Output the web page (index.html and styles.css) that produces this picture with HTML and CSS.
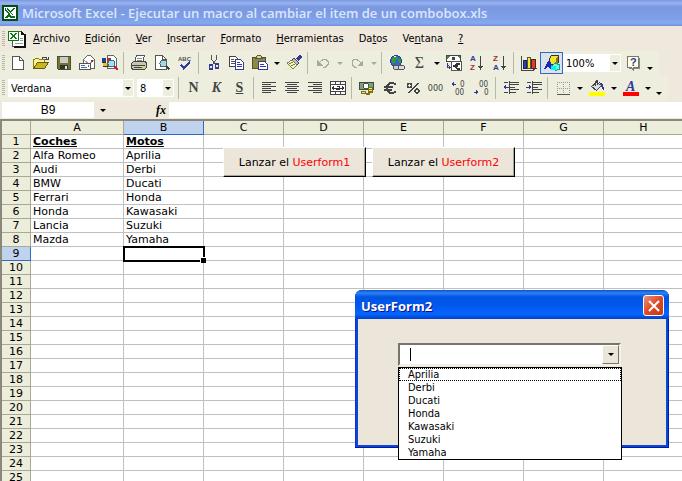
FILE: index.html
```html
<!DOCTYPE html>
<html lang="es">
<head>
    <meta charset="UTF-8">
    <title>Microsoft Excel - Ejecutar un macro al cambiar el item de un combobox.xls</title>
    <link rel="stylesheet" href="styles.css">
</head>
<body>
    <header class="titlebar">
        <svg class="ic" viewBox="0 0 16 16"><path fill="#054d10" d="M0 0h16v16H0z"/><path fill="#fff" d="M2 2h12v12H2z"/><path fill="#0a6e1e" d="M3 3h3l2 3 3-3h2L9 8l4 4v1H8l-1-2-2 2H3l3-4-3-4z"/><path stroke="#fff" d="M4 3.500l6 7M12.500 10h-3"/></svg>
        <h1>Microsoft Excel - Ejecutar un macro al cambiar el item de un combobox.xls</h1>
    </header>

    <nav class="menubar">
        <span class="grip"></span>
        <svg class="book" viewBox="0 0 18 18"><path fill="#fff" stroke="#555" d="M6.500 1.500h7l3 3v12h-12v-6"/><path fill="#111" d="M16 4h2v14H6v-2h10zM13 1l4 4h-4z"/><path fill="#999" d="M12 8h3v1h-3zM12 10h3v1h-3zM7 13h8v1H7z"/><path fill="#fff" stroke="#087a16" d="M.5 1.500h10v9H.5z"/><path stroke="#087a16" stroke-width="2" d="M2.500 3l6 6"/><path stroke="#087a16" d="M8.500 3l-6 6"/></svg>
        <a href="#"><u>A</u>rchivo</a>
        <a href="#"><u>E</u>dición</a>
        <a href="#"><u>V</u>er</a>
        <a href="#"><u>I</u>nsertar</a>
        <a href="#"><u>F</u>ormato</a>
        <a href="#"><u>H</u>erramientas</a>
        <a href="#">Da<u>t</u>os</a>
        <a href="#">Ve<u>n</u>tana</a>
        <a href="#"><u>?</u></a>
    </nav>

    <div class="toolbar">
        <span class="grip"></span>
        <button class="tool" aria-label="Nuevo"><svg class="ic" viewBox="0 0 16 16"><path fill="#fff" stroke="#555" d="M2.500 1.500h7l4 4v9h-11z"/><path fill="none" stroke="#555" d="M9.500 1.500v4h4"/></svg></button>
        <button class="tool" aria-label="Abrir"><svg class="ic" viewBox="0 0 16 16"><path fill="#fdf58c" stroke="#8a7b14" d="M.5 13.500v-9h1l1-1h3l1 1h5v3"/><path fill="#c9b51e" stroke="#655a14" d="M.5 13.500l4-6h11l-4 6z"/><path fill="none" stroke="#444" d="M9 3.500l1-1h3l1.500 2M12 4.500h3v-3"/></svg></button>
        <button class="tool" aria-label="Guardar"><svg class="ic" viewBox="0 0 16 16"><path fill="#77752c" stroke="#4c4b3c" d="M1.500 1.500h13v13h-12l-1-1z"/><path fill="#c9cbc4" d="M4 2h8v6H4z"/><path fill="#333" d="M4 10h8v4H4z"/><path fill="#ddd" d="M9 11h2v3H9z"/></svg></button>
        <button class="tool" aria-label="Correo"><svg class="ic" viewBox="0 0 16 16"><path fill="#fff" stroke="#666" d="M4.500 8V4.500l4-4h3l4 4v9h-4"/><path fill="none" stroke="#999" d="M5 5l5 4 5-4"/><path fill="#c22" d="M12 5h2v2h-2z"/><path fill="#fff" stroke="#555" d="M.5 8.500h11v6H.5z"/><path fill="#46a" d="M2 10h4v1H2zM2 12h6v1H2zM9 10h1v2H9z"/></svg></button>
        <button class="tool" aria-label="Buscar"><svg class="ic" viewBox="0 0 16 16"><path fill="#fff" stroke="#666" d="M5.500 .5h6l3 3v10h-9z"/><path fill="#248" d="M0 3h4v4H0zM6 3h3v2H6z"/><path fill="#c22" d="M5 3h3v3H5z"/><path fill="#e8c51c" d="M1 8h4v3H1z"/><path fill="#333" d="M0 7h4v1H0zM1 11h5v1H1z"/><circle cx="9.500" cy="8.500" r="3.500" fill="#9fe1ee" stroke="#467"/><path stroke="#b23" stroke-width="2" d="M12 11l3.500 4"/></svg></button>
        <span class="sep"></span>
        <button class="tool" aria-label="Imprimir"><svg class="ic" viewBox="0 0 16 16"><path fill="#fff" stroke="#555" d="M3.500 7.500l2-7h8l-2 7z"/><path fill="#888" d="M6 3h5v1H6zM6 5h5v1H6z"/><path fill="#c7c6b3" stroke="#444" d="M.5 8.500l2-2h12l1 2v4l-2 2h-12l-1-2z"/><path fill="#444" d="M1 10h13v1H1zM3 12h8v1H3z"/><path fill="#ee3" d="M9 11h3v1H9z"/></svg></button>
        <button class="tool" aria-label="Vista preliminar"><svg class="ic" viewBox="0 0 16 16"><path fill="#fff" stroke="#555" d="M1.500 .5h7l4 4v10h-11z"/><path fill="none" stroke="#555" d="M8.500 .5v4h4"/><circle cx="9.500" cy="8.500" r="3.500" fill="#9cdce2" stroke="#566"/><path stroke="#444" stroke-width="2" d="M12 11l3.500 3.500"/></svg></button>
        <button class="tool" aria-label="Ortografía"><svg class="ic" viewBox="0 0 16 16"><text class="abc" x="1" y="6">ABC</text><path fill="none" stroke="#33399a" stroke-width="2" d="M4 9.500l3 4 6-7"/></svg></button>
        <span class="sep"></span>
        <button class="tool" aria-label="Cortar"><svg class="ic" viewBox="0 0 16 16"><path fill="none" stroke="#555" d="M5.500 0v4l4 6M10.500 0v4l-4 6"/><path fill="none" stroke="#33399a" stroke-width="1.500" d="M3.500 10h3v4h-3zM9.500 9h3v4h-3z"/></svg></button>
        <button class="tool" aria-label="Copiar"><svg class="ic" viewBox="0 0 16 16"><path fill="#fff" stroke="#444" d="M.5 1.500h6l3 3v7h-9z"/><path fill="#555" d="M2 4h3v1H2zM2 6h4v1H2zM2 8h4v1H2z"/><path fill="#fff" stroke="#33399a" d="M6.500 4.500h5l3 3v7h-8z"/><path fill="#33399a" d="M8 7h3v1H8zM8 9h5v1H8zM8 11h5v1H8z"/></svg></button>
        <button class="tool" aria-label="Pegar"><svg class="ic" viewBox="0 0 16 16"><path fill="#8c8a45" stroke="#55532a" d="M.5 2.500h13v11H.5z"/><path fill="#e5dc6c" stroke="#555" d="M3.500 3.500l2-3h3l2 3z"/><path fill="#fff" stroke="#33399a" d="M6.500 6.500h6l3 3v5h-9z"/><path fill="#33399a" d="M8 9h4v1H8zM8 11h6v1H8z"/></svg></button>
        <button class="arrow" aria-label="Opciones de pegado"></button>
        <button class="tool" aria-label="Copiar formato"><svg class="ic" viewBox="0 0 16 16"><path stroke="#33399a" stroke-width="3" d="M15 1l-4 4"/><path fill="#bbb" stroke="#444" d="M8 3l5 5-2 2-5-5z"/><path fill="#fbf9a5" stroke="#777" d="M6 5L1 8l6 6 4-4z"/><path stroke="#776" d="M3 9l4-2M5 11l4-2"/><path fill="#ee0" d="M0 14h1v1H0zM2 13h1v1H2zM4 14h1v1H4z"/></svg></button>
        <span class="sep"></span>
        <button class="tool" aria-label="Deshacer" disabled><svg class="ic" viewBox="0 0 16 16"><path fill="none" stroke="#aaa99b" d="M8 12.500h2l3-3v-3l-2-2H8L4 8"/><path fill="#aaa99b" d="M2 5v6h6z"/></svg></button>
        <button class="arrow off" aria-label="Lista deshacer" disabled></button>
        <button class="tool" aria-label="Rehacer" disabled><svg class="ic" viewBox="0 0 16 16"><path fill="none" stroke="#aaa99b" d="M8 12.500H6l-3-3v-3l2-2h3L12 8"/><path fill="#aaa99b" d="M14 5v6H8z"/></svg></button>
        <button class="arrow off" aria-label="Lista rehacer" disabled></button>
        <span class="sep"></span>
        <button class="tool" aria-label="Hipervínculo"><svg class="ic" viewBox="0 0 16 16"><circle cx="7" cy="6" r="5.500" fill="#3b62c8" stroke="#248"/><path fill="#2aa52a" d="M4 2h4v3H6v3H3V4zM9 4h3v4h-2z"/><path fill="#fff" d="M5 1h2v1H5z"/><rect x="4.500" y="10.500" width="6" height="4" rx="2" fill="#ccc" stroke="#555"/><rect x="9.500" y="10.500" width="6" height="4" rx="2" fill="#ddd" stroke="#555"/></svg></button>
        <button class="tool sigma" aria-label="Autosuma">Σ</button>
        <button class="arrow" aria-label="Funciones"></button>
        <button class="tool" aria-label="Conversión de euro"><svg class="ic" viewBox="0 0 16 16"><path fill="#fff" stroke="#444" d="M.5 .5h14v6H.5z"/><path fill="#3f8f4a" d="M1 1h3L1 4zM14 1v3l-3-3z"/><circle cx="7.500" cy="3.500" r="1.500" fill="#444"/><path fill="#fff" stroke="#555" d="M5.500 6.500h10v9h-10z"/><path fill="none" stroke="#333" stroke-width="2" d="M13.500 8.500H11L9 11l2 2.500h2.500M7 11h5"/><path fill="none" stroke="#33399a" d="M1.500 8v4.500h3M2.500 10.500l2 2-2 2"/></svg></button>
        <button class="tool" aria-label="Orden ascendente"><svg class="ic" viewBox="0 0 16 16"><text class="az blue" x="1" y="6">A</text><text class="az red" x="1" y="15">Z</text><path fill="#444" d="M11 1h1v10h2l-2.500 4L9 11h2z"/></svg></button>
        <button class="tool" aria-label="Orden descendente"><svg class="ic" viewBox="0 0 16 16"><text class="az red" x="1" y="6">Z</text><text class="az blue" x="1" y="15">A</text><path fill="#444" d="M11 1h1v10h2l-2.500 4L9 11h2z"/></svg></button>
        <span class="sep"></span>
        <button class="tool" aria-label="Gráficos"><svg class="ic" viewBox="0 0 16 16"><path fill="none" stroke="#444" d="M.5 1v14h12l3-2"/><path fill="#2a3fd0" stroke="#224" d="M2.500 5.500h3v8h-3z"/><path fill="#f3e92b" stroke="#554" d="M6.500 2.500h3v11h-3z"/><path fill="#e23a2a" stroke="#522" d="M10.500 4.500h4v8l-1 1h-3z"/></svg></button>
        <button class="tool pressed" aria-label="Dibujo"><svg class="ic" viewBox="0 0 16 16"><path fill="#f4e52c" stroke="#333" d="M5.500 3.500l2-3h7v7l-2 2h-7z"/><path fill="#8a7d14" d="M12 3l2-2v7l-2 2z"/><path fill="#1a28c0" d="M0 14L4 6h2l3 8H6l-1-2H3l-1 2z"/><path fill="#6fd" stroke="#299" d="M7.500 11l4-3 4 2v4l-4 1.500z"/><circle cx="9.500" cy="13" r="2.500" fill="#1ee"/></svg></button>
        <label class="combo zoom"><select aria-label="Zoom"><option>100%</option></select></label>
        <button class="tool" aria-label="Ayuda"><svg class="ic" viewBox="0 0 16 16"><path fill="#888" d="M4 3h11v11H9v2l-3-2H4z"/><path fill="#fffee0" stroke="#777" d="M2.500 1.500h11v11h-5v2l-2-2h-4z"/><text class="qm" x="5" y="11">?</text></svg></button>
        <button class="arrow low" aria-label="Más botones"></button>
    </div>

    <div class="toolbar">
        <span class="grip"></span>
        <label class="combo font"><select aria-label="Fuente"><option>Verdana</option></select></label>
        <label class="combo size"><select aria-label="Tamaño de fuente"><option>8</option></select></label>
        <span class="sep"></span>
        <button class="tool letter"><b>N</b></button>
        <button class="tool letter"><b><i>K</i></b></button>
        <button class="tool letter"><b><u>S</u></b></button>
        <span class="sep"></span>
        <button class="tool" aria-label="Alinear a la izquierda"><svg class="ic" viewBox="0 0 16 16"><path stroke="#444" d="M1 2.500h14M1 4.500h9M1 6.500h14M1 8.500h9M1 10.500h14M1 12.500h9"/></svg></button>
        <button class="tool" aria-label="Centrar"><svg class="ic" viewBox="0 0 16 16"><path stroke="#444" d="M1 2.500h14M3 4.500h10M1 6.500h14M3 8.500h10M1 10.500h14M3 12.500h10"/></svg></button>
        <button class="tool" aria-label="Alinear a la derecha"><svg class="ic" viewBox="0 0 16 16"><path stroke="#444" d="M1 2.500h14M6 4.500h9M1 6.500h14M6 8.500h9M1 10.500h14M6 12.500h9"/></svg></button>
        <button class="tool" aria-label="Combinar y centrar"><svg class="ic" viewBox="0 0 16 16"><path fill="#fff" stroke="#444" d="M.5 1.500h15v13H.5zM.5 4.500h15M.5 11.500h15M5.500 1.500v3M10.500 1.500v3M5.500 11.500v3M10.500 11.500v3"/><path fill="#333" d="M1 8l3-2.500v5zM15 8l-3-2.500v5zM4 7.500h2v1H4zM10 7.500h2v1h-2z"/><path fill="none" stroke="#333" d="M6.500 6.500h3v3h-3v-1.500h3"/></svg></button>
        <span class="sep"></span>
        <button class="tool" aria-label="Estilo moneda"><svg class="ic" viewBox="0 0 16 16"><path fill="#7f9f7c" stroke="#3c4c3c" d="M.5 2.500h14v7H.5z"/><ellipse cx="7" cy="6" rx="3" ry="2.500" fill="#fff" stroke="#454"/><path fill="#f5ec5a" stroke="#7c7016" d="M9.500 7.500h4v5h-4zM2.500 11.500h4v2h-4zM7.500 13.500h3v1h-3z"/><path stroke="#7c7016" d="M9 9.500h5M9 11.500h5"/></svg></button>
        <button class="tool" aria-label="Euro"><svg class="ic" viewBox="0 0 16 16"><path fill="none" stroke="#444" stroke-width="2" d="M14 4.500C9 1 5 4 5 8s4 7 9 3.500M2 7h9M2 9.500h8"/></svg></button>
        <button class="tool" aria-label="Porcentaje"><svg class="ic" viewBox="0 0 16 16"><path fill="none" stroke="#444" stroke-width="1.500" d="M13 3L4 13"/><circle cx="4.500" cy="5.500" r="2" fill="none" stroke="#444" stroke-width="1.500"/><circle cx="12" cy="11" r="2" fill="none" stroke="#444" stroke-width="1.500"/></svg></button>
        <button class="tool zeros">000</button>
        <button class="tool" aria-label="Aumentar decimales"><svg class="ic" viewBox="0 0 16 16"><text class="dec" x="9" y="7">0</text><text class="dec" x="4" y="15">00</text><path fill="#33399a" d="M0 4l3-2.500v2h2v1H3v2z"/></svg></button>
        <button class="tool" aria-label="Disminuir decimales"><svg class="ic" viewBox="0 0 16 16"><text class="dec" x="5" y="7">00</text><text class="dec" x="10" y="15">0</text><path fill="#33399a" d="M5 12L2 9.500v2H0v1h2v2z"/></svg></button>
        <span class="sep"></span>
        <button class="tool" aria-label="Disminuir sangría"><svg class="ic" viewBox="0 0 16 16"><path stroke="#444" d="M1 2.500h4M7 2.500h9M7 4.500h9M7 7.500h5M7 9.500h9M1 12.500h4M7 12.500h6M6.500 1v13"/><path fill="#33399a" d="M0 7l3-2.500v2h3v1H3v2z"/></svg></button>
        <button class="tool" aria-label="Aumentar sangría"><svg class="ic" viewBox="0 0 16 16"><path stroke="#444" d="M1 2.500h4M7 2.500h9M7 4.500h9M7 7.500h5M7 9.500h9M1 12.500h4M7 12.500h6M6.500 1v13"/><path fill="#33399a" d="M6 7L3 4.500v2H0v1h3v2z"/></svg></button>
        <span class="sep"></span>
        <button class="tool" aria-label="Bordes"><svg class="ic" viewBox="0 0 16 16"><path fill="none" stroke="#999" stroke-dasharray="1 1" d="M2 2.500h13M2 8.500h13M2.500 2v12M8.500 2v12M14.500 2v12"/><path stroke="#555" d="M2 14.500h13"/></svg></button>
        <button class="arrow" aria-label="Tipos de borde"></button>
        <button class="tool" aria-label="Color de relleno"><svg class="ic" viewBox="0 0 16 16"><path fill="#ddd" stroke="#444" d="M2.500 6.500l5-4 5 3-5 5z"/><path fill="none" stroke="#444" d="M6.500 6V1.500l2-1v4"/><path fill="#33399a" d="M10 2l4 2 1 6-2-1-1-4z"/><path fill="#ff0" d="M0 12h16v4H0z"/></svg></button>
        <button class="arrow" aria-label="Colores de relleno"></button>
        <button class="tool" aria-label="Color de fuente"><svg class="ic" viewBox="0 0 16 16"><text class="fc" x="3" y="11">A</text><path fill="#f00" d="M0 12h16v4H0z"/></svg></button>
        <button class="arrow" aria-label="Colores de fuente"></button>
        <button class="arrow low" aria-label="Más botones"></button>
    </div>

    <div class="formulabar">
        <label class="namebox"><input type="text" aria-label="Cuadro de nombres" value="B9"></label>
        <button class="arrow name-arrow" aria-label="Nombres"></button>
        <button class="fx" aria-label="Insertar función"><i>fx</i></button>
        <input class="formula" type="text" aria-label="Barra de fórmulas">
    </div>

    <main class="sheet">
        <table class="grid">
            <colgroup><col class="c-num"><col class="c-a"><col span="7" class="c-std"></colgroup>
            <thead>
                <tr><th></th><th>A</th><th class="sel">B</th><th>C</th><th>D</th><th>E</th><th>F</th><th>G</th><th>H</th></tr>
            </thead>
            <tbody id="rows"></tbody>
        </table>

        <button class="launch launch-1">Lanzar el <span>Userform1</span></button>
        <button class="launch launch-2">Lanzar el <span>Userform2</span></button>

        <section class="userform">
            <div class="form-title">
                <h2>UserForm2</h2>
                <button class="close" aria-label="Cerrar"><svg viewBox="0 0 12 12"><path stroke="#fff" stroke-width="2" d="M1 1l10 10M11 1L1 11"/></svg></button>
            </div>
            <div class="form-body">
                <div class="field">
                    <span class="caret"></span>
                    <input type="text" aria-label="Motos">
                    <button class="arrow drop" aria-label="Desplegar"></button>
                </div>
                <select class="list" size="7" aria-label="Lista de motos">
                    <option class="first">Aprilia</option>
                    <option>Derbi</option>
                    <option>Ducati</option>
                    <option>Honda</option>
                    <option>Kawasaki</option>
                    <option>Suzuki</option>
                    <option>Yamaha</option>
                </select>
            </div>
        </section>
    </main>

    <script>
        const data = [
            ['Coches', 'Motos'],
            ['Alfa Romeo', 'Aprilia'],
            ['Audi', 'Derbi'],
            ['BMW', 'Ducati'],
            ['Ferrari', 'Honda'],
            ['Honda', 'Kawasaki'],
            ['Lancia', 'Suzuki'],
            ['Mazda', 'Yamaha']
        ];
        const rowCount = 25;
        const activeRow = 9;
        let html = '';

        for (let i = 1; i <= rowCount; i++) {
            const row = data[i - 1] || ['', ''];
            const active = i === activeRow;
            html += `<tr${i === 1 ? ' class="heading"' : ''}><th${active ? ' class="sel"' : ''}>${i}</th>`;
            html += `<td>${row[0]}</td><td${active ? ' class="active"' : ''}>${row[1]}</td>`;
            html += '<td></td>'.repeat(6) + '</tr>';
        }

        document.getElementById('rows').innerHTML = html;
    </script>
</body>
</html>
```

FILE: styles.css
```css
* {
    box-sizing: border-box;
}
body {
    margin: 0;
    height: 100vh;
    display: flex;
    flex-direction: column;
    overflow: hidden;
    background: #efe9dd;
    color: #000;
    font-family: "DejaVu Sans Condensed", "DejaVu Sans", sans-serif;
    font-size: 11px;
}
h1, h2 {
    margin: 0;
}
button, input, select {
    margin: 0;
    padding: 0;
    border: 0;
    border-radius: 0;
    background: none;
    color: inherit;
    font: inherit;
}
button {
    flex: none;
}
input, select {
    appearance: none;
    outline: none;
    min-width: 0;
}
svg {
    display: block;
    flex: none;
}
.ic {
    width: 16px;
    height: 16px;
    overflow: visible;
    shape-rendering: crispEdges;
}

/* title bar */
.titlebar {
    flex: none;
    display: flex;
    align-items: center;
    gap: 4px;
    height: 26px;
    padding-left: 2px;
    background: linear-gradient(#7b98e0, #98b4f2 3px, #7b98e0 7px, #7e9fe8 18px, #86a9ee 23px, #7090dc);
}
.titlebar h1 {
    color: #dbe6fc;
    font: 600 13px "Open Sans", sans-serif;
    white-space: nowrap;
}

/* menu */
.menubar {
    flex: none;
    display: flex;
    align-items: center;
    gap: 15px;
    height: 25px;
    padding-left: 2px;
}
.menubar a {
    color: #000;
    text-decoration: none;
}
.grip {
    flex: none;
    width: 3px;
    height: 16px;
    background: repeating-linear-gradient(#b9b8a8 0 1px, transparent 1px 2px);
}
.menubar .grip {
    margin-right: -12px;
}
.book {
    width: 18px;
    height: 18px;
    margin-right: -8px;
    shape-rendering: crispEdges;
}

/* toolbars */
.toolbar {
    flex: none;
    align-self: flex-start;
    display: flex;
    align-items: center;
    height: 25px;
    padding: 0 4px 0 2px;
    background: #edeedd;
    border-bottom: 1px solid #f1eadf;
}
.toolbar .grip {
    margin-right: 1px;
}
.tool {
    width: 23px;
    height: 22px;
    display: flex;
    align-items: center;
    justify-content: center;
    color: #444;
}
.pressed {
    border: 1px solid #316ac5;
    background: #dde1ea;
}
.sep {
    flex: none;
    width: 1px;
    height: 22px;
    margin: 0 3px 0 2px;
    background: #b9b8a8;
}
.arrow {
    width: 11px;
    height: 22px;
    display: flex;
    align-items: center;
    justify-content: center;
}
.arrow::after, .combo::after {
    content: "";
    border: 3px solid transparent;
    border-top-color: #000;
    border-bottom: 0;
}
.arrow.off::after {
    border-top-color: #aaa99b;
}
.low {
    align-items: flex-end;
    padding-bottom: 4px;
}
.combo {
    flex: none;
    display: flex;
    align-items: center;
    height: 18px;
    padding: 0 2px;
    background: linear-gradient(90deg, #fff calc(100% - 10px), #edeedd 0);
    border: 1px solid #fff;
}
.combo select {
    flex: 1;
}
.font {
    width: 126px;
    margin-left: 2px;
}
.size {
    width: 37px;
    margin: 0 2px 0 3px;
}
.zoom {
    width: 58px;
}
.sigma {
    font: 16px "Liberation Serif", serif;
}
.letter {
    font: 14px "Liberation Serif", serif;
}
.zeros {
    font: 9px "DejaVu Sans Condensed", sans-serif;
}
.abc {
    font: bold 6px "Liberation Sans", sans-serif;
    fill: #555;
}
.az {
    font: bold 8px "Liberation Sans", sans-serif;
}
.blue {
    fill: #33399a;
}
.red {
    fill: #a02c38;
}
.dec {
    font: 8px "DejaVu Sans Condensed", sans-serif;
    fill: #444;
}
.qm {
    font: bold 11px "Liberation Sans", sans-serif;
    fill: #33399a;
}
.fc {
    font: italic bold 14px "Liberation Serif", serif;
    fill: #33399a;
}

/* formula bar */
.formulabar {
    flex: none;
    display: flex;
    align-items: center;
    height: 18px;
    padding: 1px 0 1px 2px;
}
.namebox {
    flex: none;
    width: 92px;
    height: 16px;
    background: #fff;
}
.namebox input {
    width: 100%;
    height: 16px;
    text-align: center;
    font: 12px "Liberation Sans", sans-serif;
}
.name-arrow {
    width: 18px;
    height: 16px;
}
.fx {
    width: 57px;
    padding-right: 3px;
    text-align: right;
    font: bold 12px "Liberation Serif", serif;
    line-height: 16px;
}
.formula {
    flex: 1;
    height: 16px;
    background: #fff;
}

/* sheet */
.sheet {
    position: relative;
    flex: 1;
    min-height: 0;
    overflow: hidden;
    background: #fff;
    border: solid #8a887a;
    border-width: 2px 0 0 2px;
}
.grid {
    table-layout: fixed;
    width: 682px;
    border-collapse: separate;
    border-spacing: 0;
    font-family: "DejaVu Sans", sans-serif;
}
.c-num {
    width: 29px;
}
.c-a {
    width: 93px;
}
.c-std {
    width: 80px;
}
.grid th, .grid td {
    height: 14px;
    padding: 0;
    border: solid #c0c0c0;
    border-width: 0 1px 1px 0;
    line-height: 13px;
    white-space: nowrap;
}
.grid td {
    padding-left: 2px;
}
.grid th {
    background: #ecedda;
    border-color: #a9a892;
    font-weight: normal;
}
.grid .sel {
    background: #c1d2ee;
    border-color: #316ac5;
}
.heading td {
    font-weight: bold;
    text-decoration: underline;
}
.grid .active {
    position: relative;
    outline: 2px solid #000;
    outline-offset: -1px;
}
.active::after {
    content: "";
    position: absolute;
    right: -3px;
    bottom: -3px;
    width: 5px;
    height: 5px;
    background: #000;
    border: solid #fff;
    border-width: 1px 0 0 1px;
}

/* buttons placed on the sheet */
.launch {
    position: absolute;
    top: 26px;
    width: 143px;
    height: 30px;
    background: #ece6da;
    border: 1px solid #fff;
    border-right: 1px solid #000;
    border-bottom: 1px solid #000;
    box-shadow: inset -1px -1px #a8a494;
    font-family: "DejaVu Sans", sans-serif;
}
.launch-1 {
    left: 221px;
}
.launch-2 {
    left: 370px;
}
.launch span {
    color: #f00;
}

/* user form window */
.userform {
    position: absolute;
    left: 353px;
    top: 169px;
    width: 314px;
    height: 158px;
    padding: 0 3px 3px;
    background: #0a46d8;
    border-radius: 7px 7px 0 0;
    box-shadow: inset -1px -1px #0019a0, inset 1px 0 #0831d9;
}
.form-title {
    display: flex;
    align-items: center;
    justify-content: space-between;
    height: 29px;
    margin: 0 -3px;
    padding: 2px 5px 0 6px;
    border-radius: 7px 7px 0 0;
    background: linear-gradient(#0a50d0, #2c82f6 3px, #0054e3 7px, #0058ec 16px, #0566fd 24px, #003fd0);
}
.form-title h2 {
    color: #fff;
    font: bold 13px "Open Sans", sans-serif;
    text-shadow: 1px 1px #0f1089;
}
.close {
    display: flex;
    align-items: center;
    justify-content: center;
    width: 21px;
    height: 21px;
    border: 1px solid #fff;
    border-radius: 3px;
    background: linear-gradient(135deg, #ee9078, #dd4a28 50%, #c23a16);
}
.close svg {
    width: 12px;
    height: 12px;
}
.form-body {
    height: 126px;
    padding: 24px 45px 0 40px;
    background: #ece6da;
}
.field {
    display: flex;
    align-items: center;
    height: 23px;
    padding-left: 10px;
    background: #fff;
    border: 2px solid;
    border-color: #77756a #f3f0e6 #f3f0e6 #77756a;
}
.field input {
    flex: 1;
}
.caret {
    width: 1px;
    height: 13px;
    background: #000;
}
.drop {
    width: 17px;
    height: 19px;
    background: #ece6da;
    border: 1px solid;
    border-color: #fff #77756a #77756a #fff;
}
.list {
    display: block;
    width: calc(100% + 1px);
    height: 93px;
    margin-top: 1px;
    overflow: hidden;
    background: #fff;
    border: 1px solid #000;
}
.list option {
    min-height: 13px;
    padding: 0 9px;
    line-height: 13px;
}
.list .first {
    outline: 1px dotted #000;
    outline-offset: -1px;
}
```
